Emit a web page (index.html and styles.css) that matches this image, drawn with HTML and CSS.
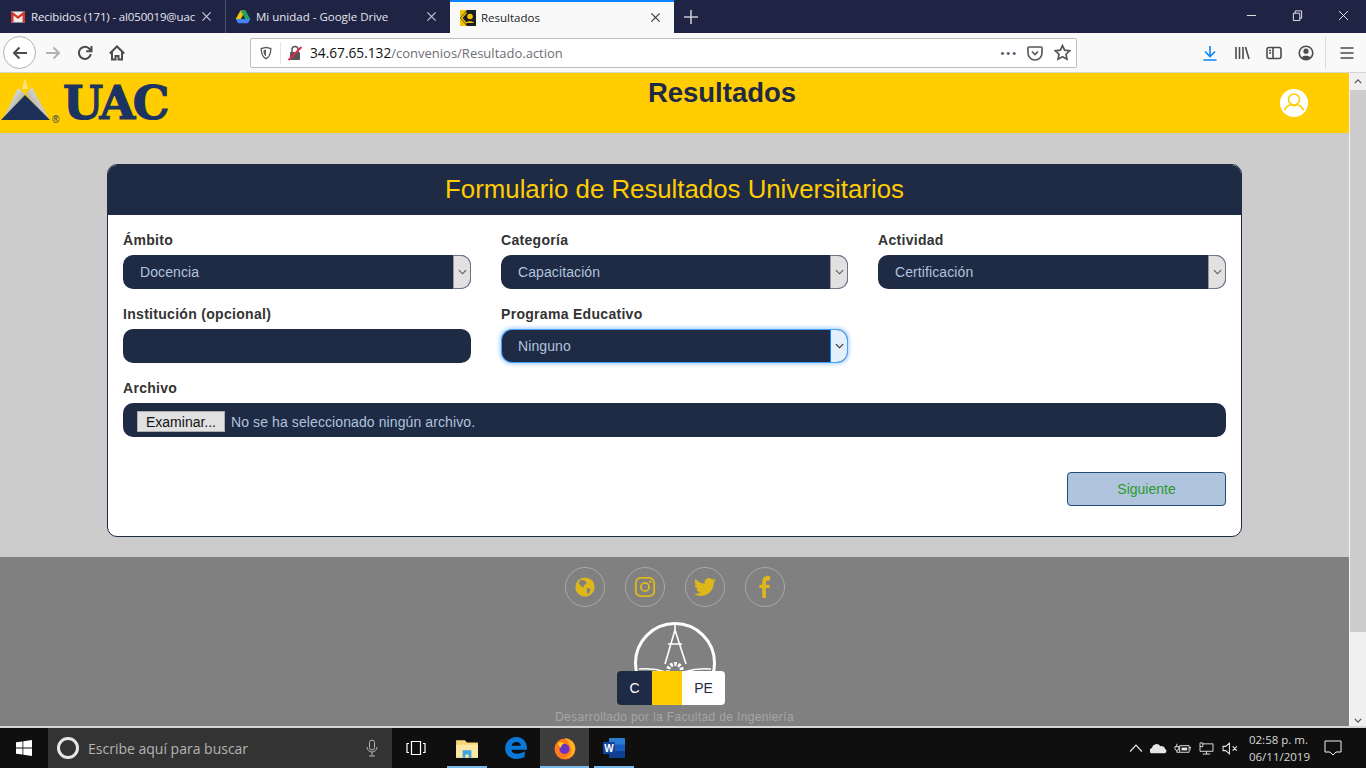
FILE: index.html
```html
<!DOCTYPE html>
<html lang="es">
<head>
    <meta charset="UTF-8">
    <meta name="viewport" content="width=device-width, initial-scale=1.0">
    <title>Resultados</title>
    <link rel="stylesheet" href="styles.css">
</head>
<body>
    <!-- barra de pestañas -->
    <div class="tabbar">
        <div class="tab">
            <svg class="favicon" viewBox="0 0 16 16"><rect x="1" y="2.500" width="14" height="11" fill="#eee"/><path d="M1 3v10.500h2.500V6.500L8 10l4.500-3.500v7H15V3l-1-.5L8 7 2 2.500z" fill="#d2392b"/></svg>
            <span class="tab-title tab-title-long">Recibidos (171) - al050019@uac</span>
            <svg class="tab-close" viewBox="0 0 12 12"><path d="M1.500 1.500l9 9M10.500 1.500l-9 9"/></svg>
        </div>
        <div class="tab tab-sep">
            <svg class="favicon" viewBox="0 0 16 16"><path d="M5.500 1.500h5L5.800 10H.7z" fill="#f4c20d"/><path d="M10.500 1.500L15.300 10h-5L5.500 1.500z" fill="#1fa463"/><path d="M.7 10h14.600l-2.400 4.300H3.200z" fill="#4285f4"/></svg>
            <span class="tab-title">Mi unidad - Google Drive</span>
            <svg class="tab-close" viewBox="0 0 12 12"><path d="M1.500 1.500l9 9M10.500 1.500l-9 9"/></svg>
        </div>
        <div class="tab tab-active">
            <svg class="favicon" viewBox="0 0 16 16"><rect width="16" height="16" fill="#f2c200"/><path d="M7 0h9v16H7L0 8z" fill="#1d1d24"/><path d="M6.500 2.500L1.500 8l5 5.500" fill="none" stroke="#f2c200" stroke-width="1.500"/><circle cx="10" cy="6.500" r="2.800" fill="#f2c200"/><path d="M6 13c.5-2.500 7.500-2.500 8 0z" fill="#f2c200"/></svg>
            <span class="tab-title">Resultados</span>
            <svg class="tab-close" viewBox="0 0 12 12"><path d="M1.500 1.500l9 9M10.500 1.500l-9 9"/></svg>
        </div>
        <svg class="tab-new" viewBox="0 0 14 14"><path d="M7 0v14M0 7h14"/></svg>
        <div class="win-controls">
            <svg viewBox="0 0 12 12"><path d="M1 6h10"/></svg>
            <svg viewBox="0 0 12 12"><path d="M1.500 3.500h7v8h-7zM3.500 3.500v-2.500h7v8h-2"/></svg>
            <svg viewBox="0 0 12 12"><path d="M1 1l10 10M11 1L1 11"/></svg>
        </div>
    </div>

    <!-- barra de navegacion -->
    <div class="toolbar">
        <div class="back-btn">
            <svg class="tool-icon nav-icon" viewBox="0 0 16 16"><path d="M15 8H2M7.500 2.500L2 8l5.500 5.500"/></svg>
        </div>
        <svg class="tool-icon fwd" viewBox="0 0 16 16"><path d="M1 8h13M8.500 2.500L14 8l-5.500 5.500"/></svg>
        <svg class="tool-icon nav-icon reload" viewBox="0 0 16 16"><path d="M13.800 9A6 6 0 1 1 11.800 3.300L14 5.500M14.500 1v5.300H9.200"/></svg>
        <svg class="tool-icon nav-icon home" viewBox="0 0 16 16"><path d="M.8 8.500L8 1.500l7.200 7M3 6.500v8h3.500v-3.500h3v3.500H13v-8"/></svg>
        <div class="urlbar">
            <svg class="url-shield" viewBox="0 0 16 16"><path d="M8 1.500l5.500 1.500c0 5-1 9-5.500 11.500C3.500 12 2.500 8 2.500 3z"/><path class="shield-fill" d="M8 4v8c-2-1.500-3-4-3-7z"/></svg>
            <span class="url-divider"></span>
            <svg class="url-lock" viewBox="0 0 16 16"><path d="M5 7V4.500a3 3 0 0 1 6 0V7" fill="none" stroke="#555" stroke-width="1.500"/><rect x="3" y="7" width="10" height="8" rx="1" fill="#555"/><path d="M1.500 15L14.500 2" stroke="#e22850" stroke-width="2"/></svg>
            <span class="url-text"><span class="url-host">34.67.65.132</span>/convenios/Resultado.action</span>
            <span class="url-dots">•••</span>
            <svg class="url-pocket" viewBox="0 0 16 16"><path d="M2 2h12a1 1 0 0 1 1 1v5a7 7 0 0 1-14 0V3a1 1 0 0 1 1-1zM5 6.500l3 3 3-3"/></svg>
            <svg class="url-star" viewBox="0 0 16 16"><path d="M8 1.500l2 4.300 4.700.6-3.400 3.200.9 4.700L8 12l-4.200 2.300.9-4.700L1.300 6.400 6 5.800z"/></svg>
        </div>
        <div class="tool-right">
            <svg class="tool-icon download" viewBox="0 0 16 16"><path d="M8 1v10M3 6.500L8 11.500l5-5M1.500 15h13"/></svg>
            <svg class="tool-icon" viewBox="0 0 16 16"><path d="M2 2v12M5.500 2v12M9 2v12M11.500 2l3.500 12"/></svg>
            <svg class="tool-icon" viewBox="0 0 16 16"><rect x="1" y="2.500" width="14" height="11" rx="2"/><path d="M7 2.500v11M3 5.500h2M3 8h2"/></svg>
            <svg class="tool-icon" viewBox="0 0 16 16"><circle cx="8" cy="8" r="6.800"/><circle class="solid" cx="8" cy="6.200" r="2.600"/><path class="solid" d="M3.500 12.500c1-2.500 8-2.500 9 0-2 2.200-7 2.200-9 0z"/></svg>
            <span class="tool-sep"></span>
            <svg class="tool-icon menu" viewBox="0 0 16 16"><path d="M1.500 3h13M1.500 8h13M1.500 13h13"/></svg>
        </div>
    </div>

    <div class="viewport">
        <div class="page">
            <header class="site-header">
                <div class="brand">
                    <svg class="brand-mark" viewBox="0 0 54 44">
                        <defs>
                            <linearGradient id="silverL" x1="0" y1="0" x2="1" y2="1"><stop offset="0" stop-color="#fff"/><stop offset="1" stop-color="#8a8a80"/></linearGradient>
                            <linearGradient id="silverR" x1="1" y1="0" x2="0" y2="1"><stop offset="0" stop-color="#f4f4f0"/><stop offset="1" stop-color="#9a9a8c"/></linearGradient>
                        </defs>
                        <path d="M25 0l3 11h-6z" fill="#ffe27a"/>
                        <path d="M3 41L18 10l7 6L8 36z" fill="url(#silverL)"/>
                        <path d="M32 9l17 32-7-5-16-20z" fill="url(#silverR)"/>
                        <path d="M1 42l24-25 25 25z" fill="#1d3158"/>
                    </svg>
                    <span class="brand-name">UAC</span>
                    <span class="brand-reg">®</span>
                </div>
                <h1 class="site-title">Resultados</h1>
                <div class="user-slot">
                    <svg class="user-icon" viewBox="0 0 28 28"><circle cx="14" cy="14" r="14" fill="#fff"/><circle cx="14" cy="10.500" r="5.500" fill="none" stroke="#ffcd00" stroke-width="1.500"/><path d="M4.500 21.500c1-4 5-5.500 6.500-6 1.500 1.500 4.500 1.500 6 0 1.500.5 5.500 2 6.500 6" fill="none" stroke="#ffcd00" stroke-width="1.500"/></svg>
                </div>
            </header>

            <main class="content">
                <section class="card">
                    <h2 class="card-title">Formulario de Resultados Universitarios</h2>
                    <form class="card-body">
                        <div class="field">
                            <label class="field-label">Ámbito</label>
                            <div class="select"><span>Docencia</span><span class="select-arrow"><svg viewBox="0 0 10 6"><path d="M1 1l4 4 4-4"/></svg></span></div>
                        </div>
                        <div class="field">
                            <label class="field-label">Categoría</label>
                            <div class="select"><span>Capacitación</span><span class="select-arrow"><svg viewBox="0 0 10 6"><path d="M1 1l4 4 4-4"/></svg></span></div>
                        </div>
                        <div class="field">
                            <label class="field-label">Actividad</label>
                            <div class="select"><span>Certificación</span><span class="select-arrow"><svg viewBox="0 0 10 6"><path d="M1 1l4 4 4-4"/></svg></span></div>
                        </div>
                        <div class="field">
                            <label class="field-label">Institución (opcional)</label>
                            <div class="select"></div>
                        </div>
                        <div class="field">
                            <label class="field-label">Programa Educativo</label>
                            <div class="select select-focus"><span>Ninguno</span><span class="select-arrow"><svg viewBox="0 0 10 6"><path d="M1 1l4 4 4-4"/></svg></span></div>
                        </div>
                        <div class="field field-wide">
                            <label class="field-label">Archivo</label>
                            <div class="file-input"><span class="file-btn">Examinar...</span><span class="file-name">No se ha seleccionado ningún archivo.</span></div>
                        </div>
                        <div class="actions">
                            <span class="next-btn">Siguiente</span>
                        </div>
                    </form>
                </section>
            </main>

            <footer class="site-footer">
                <div class="social">
                    <span class="social-link"><svg viewBox="0 0 24 24"><circle cx="12" cy="12" r="10.500" fill="#deb81a"/><path d="M7 4l5 1 2 3-3 2-1 3-3-3-2-2zM14 13l4 1-1 4-2 2-1-3z" fill="#808080"/></svg></span>
                    <span class="social-link"><svg viewBox="0 0 24 24"><rect x="2" y="2" width="20" height="20" rx="5.500" fill="none" stroke="#deb81a" stroke-width="2"/><circle cx="12" cy="12" r="4.500" fill="none" stroke="#deb81a" stroke-width="2"/><circle cx="17.800" cy="6.200" r="1.300" fill="#deb81a"/></svg></span>
                    <span class="social-link"><svg viewBox="0 0 24 24"><path fill="#deb81a" d="M23.953 4.570a10 10 0 01-2.825.775 4.958 4.958 0 002.163-2.723c-.951.555-2.005.959-3.127 1.184a4.920 4.920 0 00-8.384 4.482C7.690 8.095 4.067 6.130 1.640 3.162a4.822 4.822 0 00-.666 2.475c0 1.710.870 3.213 2.188 4.096a4.904 4.904 0 01-2.228-.616v.060a4.923 4.923 0 003.946 4.827 4.996 4.996 0 01-2.212.085 4.936 4.936 0 004.604 3.417 9.867 9.867 0 01-6.102 2.105c-.390 0-.779-.023-1.170-.067a13.995 13.995 0 007.557 2.209c9.053 0 13.998-7.496 13.998-13.985 0-.210 0-.420-.015-.630A9.935 9.935 0 0024 4.590z"/></svg></span>
                    <span class="social-link"><svg viewBox="0 0 24 24"><path fill="#deb81a" d="M15 5c-1.500 0-2 .8-2 2.200V9.500h4V13h-4v11H9V13H5.800V9.500H9V6.500C9 2.500 11 0 15 0h2.500v5z"/></svg></span>
                </div>
                <svg class="faculty-logo" viewBox="0 0 84 64">
                    <circle cx="42" cy="41" r="39.500" fill="none" stroke="#fff" stroke-width="3"/>
                    <path d="M42 3v6M42 8L32 42M42 8l11 34M35 22h14" fill="none" stroke="#fff" stroke-width="1.600"/>
                    <circle cx="42" cy="49" r="7" fill="none" stroke="#fff" stroke-width="4" stroke-dasharray="2.500 1.500"/>
                    <path d="M6 47c10-1 18 0 27 3M78 47c-10-1-18 0-27 3" fill="none" stroke="#fff" stroke-width="1.500"/>
                </svg>
                <p class="footer-text">Desarrollado por la Facultad de Ingeniería</p>
                <div class="cpe-badge">
                    <span class="cpe-c">C</span>
                    <span class="cpe-mid"></span>
                    <span class="cpe-pe">PE</span>
                </div>
            </footer>
        </div>
        <aside class="scrollbar">
            <svg class="scroll-arrow" viewBox="0 0 10 6"><path d="M1 5l4-4 4 4"/></svg>
            <span class="scroll-thumb"></span>
            <svg class="scroll-arrow scroll-down" viewBox="0 0 10 6"><path d="M1 1l4 4 4-4"/></svg>
        </aside>
    </div>

    <!-- barra de tareas -->
    <div class="taskbar">
        <div class="start">
            <svg viewBox="0 0 16 16"><path fill="#fff" d="M0 2.300l6.500-.9v6.200H0zM7.300 1.300L16 0v7.600H7.300zM0 8.400h6.500v6.200L0 13.700zM7.300 8.400H16V16l-8.700-1.200z"/></svg>
        </div>
        <div class="search">
            <span class="cortana"></span>
            <span class="search-text">Escribe aquí para buscar</span>
            <svg class="mic" viewBox="0 0 12 18"><rect x="3.500" y="1" width="5" height="10" rx="2.500"/><path d="M1 8a5 5 0 0 0 10 0M6 13v4M3 17h6"/></svg>
        </div>
        <div class="task-icons">
            <span class="task-item task-view"><svg class="taskview" viewBox="0 0 20 16"><path d="M5.500 1.500h9v13h-9zM3 3.500H1v9h2M17 3.500h2v9h-2"/></svg></span>
            <span class="task-item task-open"><svg viewBox="0 0 22 20"><path d="M1 3h8l2 2h10v14H1z" fill="#f7d774"/><path d="M1 7h20v12H1z" fill="#fce8a6"/><path d="M7 19v-7h8v7h-2.500v-3h-3v3z" fill="#3aa7e3"/></svg></span>
            <span class="task-item"><svg viewBox="0 0 22 22"><path fill="#0a78d6" d="M11.500 1C5 1 1 6 1 11.500S5.500 21 11 21c3.500 0 6-.8 8-2v-5c-2 1.500-4.300 2.300-7 2.300-3 0-5-1.500-5.200-3.800H21c.5-6-3-11.500-9.500-11.500zM7 9c.2-2 2-3.500 4.300-3.500S15.500 7 15.500 9z"/></svg></span>
            <span class="task-item task-open task-current"><svg viewBox="0 0 24 24"><circle cx="12" cy="13" r="10.500" fill="#ff7a1a"/><path d="M12 2c5 1 9 3 10 9 1 5-3 11-10 11 6-3 7-6 6-10-1-3-3-6-6-10z" fill="#ffb01f"/><circle cx="11.500" cy="13" r="5" fill="#6a32c9"/><path d="M5 7c2-1 4-1 6 0-2 1-3 3-3 5-1.500-1-2.500-3-3-5z" fill="#ffd21f"/></svg></span>
            <span class="task-item task-open"><svg viewBox="0 0 24 22"><rect x="7" y="1" width="16" height="20" rx="1" fill="#2b7cd3"/><rect x="7" y="14" width="16" height="7" fill="#103f91"/><rect x="7" y="7.500" width="16" height="6.500" fill="#185abd"/><rect x="1" y="5" width="12" height="12" rx="1" fill="#11449e"/><text class="word-w" x="7" y="14.500">W</text></svg></span>
        </div>
        <div class="tray">
            <svg class="tray-icon" viewBox="0 0 12 8"><path d="M1 7l5-5.500L11 7"/></svg>
            <svg class="tray-icon tray-wide" viewBox="0 0 18 12"><path class="solid" d="M1 11a3 3 0 0 1 1-5.500A5 5 0 0 1 11 3.500a4 4 0 0 1 5 3 2.500 2.500 0 0 1 0 4.500z"/></svg>
            <svg class="tray-icon tray-wide" viewBox="0 0 18 12"><path d="M6 3h10v7H6zM16 5h2v3M3 1v3M1 4h4v2a2 2 0 0 1-4 0zM3 8v2h3"/><path class="solid" d="M8 5h6v3H8z"/></svg>
            <svg class="tray-icon tray-wide" viewBox="0 0 16 14"><path d="M1 1h3v4H1zM4 2h11v8H1V5M8 10v3M4 13h8"/></svg>
            <svg class="tray-icon tray-wide" viewBox="0 0 16 12"><path d="M1 4h2.500L7 1v10L3.500 8H1zM10 4l4 4M14 4l-4 4"/></svg>
            <div class="clock"><span>02:58 p. m.</span><span>06/11/2019</span></div>
            <svg class="notif" viewBox="0 0 18 16"><path d="M1 1h16v11h-5l-3 3-3-3H1z"/></svg>
        </div>
    </div>
</body>
</html>
```

FILE: styles.css
```css
* {
    box-sizing: border-box;
}
html, body {
    height: 768px;
    overflow: hidden;
}
body {
    margin: 0;
    font-family: "Liberation Sans", Arial, sans-serif;
    background: #ccc;
}
svg {
    display: block;
}

/* pestañas */
.tabbar {
    display: flex;
    align-items: stretch;
    height: 33px;
    background: #1f2344;
}
.tab {
    display: flex;
    align-items: center;
    width: 225px;
    padding: 0 13px 0 10px;
    color: #e6e7ee;
    font: 11.5px "Open Sans", "Noto Sans", sans-serif;
}
.tab-sep {
    padding-left: 9px;
    border-left: 1px solid #4a4e6a;
}
.tab-active {
    width: 224px;
    background: #f9f9fa;
    color: #1c1c22;
    border-top: 2px solid #0a84ff;
}
.favicon {
    width: 16px;
    height: 16px;
    flex: none;
    margin-right: 5px;
}
.tab-title {
    flex: 1;
    overflow: hidden;
    white-space: nowrap;
}
.tab-title-long {
    letter-spacing: -.15px;
}
.tab-close {
    width: 11px;
    height: 11px;
    flex: none;
    margin-left: 1px;
    fill: none;
    stroke: #c8c9d2;
    stroke-width: 1.3;
}
.tab-active .tab-close {
    stroke: #38383d;
}
.tab-new {
    width: 14px;
    height: 14px;
    align-self: center;
    margin-left: 10px;
    fill: none;
    stroke: #c8c9d2;
    stroke-width: 1.6;
}
.win-controls {
    display: flex;
    align-items: center;
    gap: 35px;
    margin-left: auto;
    padding-right: 17px;
    padding-bottom: 3px;
}
.win-controls svg {
    width: 11px;
    height: 11px;
    fill: none;
    stroke: #f2f2f2;
    stroke-width: 1;
}

/* navegacion */
.toolbar {
    display: flex;
    align-items: center;
    height: 40px;
    padding-left: 3px;
    background: #f9f9fa;
    border-bottom: 1px solid #d4d4d4;
}
.tool-icon {
    width: 16px;
    height: 16px;
    flex: none;
    fill: none;
    stroke: #4c4c50;
    stroke-width: 1.6;
}
.tool-icon .solid {
    fill: #4c4c50;
    stroke: none;
}
.nav-icon {
    stroke-width: 2;
}
.back-btn {
    display: flex;
    align-items: center;
    justify-content: center;
    width: 33px;
    height: 33px;
    border: 1px solid #b1b1b3;
    border-radius: 50%;
    background: #fff;
}
.fwd {
    margin-left: 9px;
    stroke: #b1b1b3;
    stroke-width: 2;
}
.reload {
    margin-left: 16px;
}
.home {
    margin-left: 16px;
}
.urlbar {
    display: flex;
    align-items: center;
    width: 827px;
    height: 30px;
    margin-left: 125px;
    padding: 0 5px 0 8px;
    background: #fff;
    border: 1px solid #bebebe;
    border-radius: 2px;
}
.url-shield {
    width: 14px;
    height: 16px;
    fill: none;
    stroke: #5a5a5e;
    stroke-width: 1.5;
}
.shield-fill {
    fill: #5a5a5e;
    stroke: none;
}
.url-divider {
    width: 1px;
    height: 22px;
    margin: 0 6px 0 7px;
    background: #e3e3e5;
}
.url-lock {
    width: 16px;
    height: 16px;
    flex: none;
}
.url-text {
    margin-left: 7px;
    color: #6e6e73;
    font: 13px "Open Sans", "Noto Sans", sans-serif;
}
.url-host {
    color: #111;
    font-size: 13.7px;
}
.url-dots {
    margin-left: auto;
    color: #55555a;
    font-size: 11px;
    letter-spacing: 2px;
}
.url-pocket {
    width: 16px;
    height: 16px;
    margin-left: 9px;
    fill: none;
    stroke: #55555a;
    stroke-width: 1.6;
}
.url-star {
    width: 17px;
    height: 17px;
    margin-left: 11px;
    fill: none;
    stroke: #55555a;
    stroke-width: 1.6;
}
.tool-right {
    display: flex;
    align-items: center;
    gap: 16px;
    margin-left: 125px;
}
.download {
    stroke: #0a84ff;
}
.tool-sep {
    width: 1px;
    height: 32px;
    margin-left: -5px;
    background: #dcdcde;
}
.menu {
    margin-left: -3px;
}

/* pagina */
.viewport {
    display: flex;
    height: 653px;
}
.page {
    position: relative;
    display: flex;
    flex-direction: column;
    width: 1349px;
    overflow: hidden;
}
.site-header {
    display: flex;
    height: 60px;
    flex: none;
    background: #ffcd00;
}
.brand {
    display: flex;
    width: 170px;
    flex: none;
    position: relative;
}
.brand-mark {
    width: 54px;
    height: 44px;
    margin-top: 5px;
    flex: none;
}
.brand-name {
    margin: 3px 0 0 9px;
    color: #1c3461;
    font: bold 46px/1.2 "DejaVu Serif", "Liberation Serif", serif;
    letter-spacing: -2.300px;
    -webkit-text-stroke: 1.200px #1c3461;
}
.brand-reg {
    position: absolute;
    left: 52px;
    top: 41px;
    color: #1c3461;
    font-size: 10px;
}
.site-title {
    flex: 1;
    margin: 3px 0 0;
    color: #1f2a44;
    font-size: 27.500px;
    font-weight: bold;
    line-height: 33px;
    text-align: center;
}
.user-slot {
    width: 75px;
    flex: none;
    padding: 16px 0 0 6px;
}
.user-icon {
    width: 28px;
    height: 28px;
}
.content {
    flex: none;
    height: 424px;
    padding: 31px 107px 0;
    background: #ccc;
}
.card {
    height: 373px;
    background: #fff;
    border: 1px solid #1f2a44;
    border-radius: 10px;
    overflow: hidden;
}
.card-title {
    height: 50px;
    margin: 0;
    background: #1f2a44;
    color: #ffcd00;
    font-size: 25.800px;
    font-weight: normal;
    line-height: 48px;
    text-align: center;
}
.card-body {
    display: grid;
    grid-template-columns: 348px 347px 348px;
    column-gap: 30px;
    padding: 17px 15px 0;
}
.field {
    height: 74px;
}
.field-wide {
    grid-column: 1 / 4;
}
.field-label {
    display: block;
    height: 23px;
    color: #333;
    font-size: 14px;
    font-weight: bold;
    letter-spacing: .3px;
    line-height: 17px;
}
.select {
    display: flex;
    align-items: center;
    justify-content: space-between;
    height: 34px;
    padding-left: 17px;
    background: #1f2a44;
    border-radius: 10px;
    color: #b0c4de;
    font-size: 14px;
    letter-spacing: .1px;
    overflow: hidden;
}
.select-arrow {
    display: flex;
    align-items: center;
    justify-content: center;
    width: 18px;
    height: 34px;
    background: #e1e1e1;
    border: 1px solid #6c7488;
    border-left-color: #999;
    border-radius: 0 10px 10px 0;
}
.select-arrow svg {
    width: 9px;
    height: 6px;
    fill: none;
    stroke: #555;
    stroke-width: 1.2;
}
.select-focus {
    overflow: visible;
    box-shadow: 0 0 0 1px #45a1ff, 0 0 4px 2px #9fcdfb;
    height: 32px;
    margin: 1px 1px 0;
    padding-left: 16px;
}
.select-focus .select-arrow {
    height: 32px;
    width: 17px;
    background: #e3f0fb;
    border: 0;
    border-left: 1.500px solid #0a84ff;
}
.select-focus .select-arrow svg {
    stroke: #222;
}
.file-input {
    display: flex;
    align-items: center;
    gap: 6px;
    height: 34px;
    padding: 2px 0 0 14px;
    background: #1f2a44;
    border-radius: 10px;
    color: #b0c4de;
    font-size: 14px;
}
.file-name {
    padding-top: 1px;
    letter-spacing: .1px;
}
.file-btn {
    width: 88px;
    height: 21px;
    background: #e1e1e1;
    border: 1px solid #adadad;
    color: #111;
    line-height: 20px;
    text-align: center;
}
.actions {
    grid-column: 1 / 4;
    display: flex;
    justify-content: flex-end;
    padding-top: 18px;
}
.next-btn {
    width: 159px;
    height: 34px;
    background: #b0c4de;
    border: 1px solid #1f4a7a;
    border-radius: 4px;
    color: #2a9a2a;
    font-size: 14px;
    line-height: 32px;
    text-align: center;
}

/* pie */
.site-footer {
    flex: 1;
    display: flex;
    flex-direction: column;
    align-items: center;
    padding-top: 10px;
    background: #808080;
}
.social {
    display: flex;
    gap: 20px;
}
.social-link {
    display: flex;
    align-items: center;
    justify-content: center;
    width: 40px;
    height: 40px;
    border: 1px solid #a8a8a8;
    border-radius: 50%;
}
.social-link svg {
    width: 22px;
    height: 22px;
}
.faculty-logo {
    width: 84px;
    height: 64px;
    margin-top: 15px;
    flex: none;
}
.footer-text {
    margin: 24px 0 0;
    color: #a6a6a6;
    font-size: 12px;
    letter-spacing: .35px;
    line-height: 14px;
}
.cpe-badge {
    position: absolute;
    left: 617px;
    top: 598px;
    display: flex;
    width: 108px;
    height: 34px;
    border-radius: 4px;
    overflow: hidden;
    font-size: 14px;
    line-height: 34px;
    text-align: center;
}
.cpe-c {
    width: 35px;
    background: #1f2a44;
    color: #fff;
}
.cpe-mid {
    width: 30px;
    background: #ffcd00;
}
.cpe-pe {
    flex: 1;
    background: #fff;
    color: #1f2a44;
}

/* barra de desplazamiento */
.scrollbar {
    position: relative;
    width: 17px;
    background: #f0f0f0;
    border-left: 1px solid #f5f5f5;
}
.scroll-arrow {
    width: 8px;
    height: 5px;
    margin: 6px 0 0 4px;
    fill: none;
    stroke: #555;
    stroke-width: 1.6;
}
.scroll-thumb {
    display: block;
    height: 542px;
    margin-top: 6px;
    background: #cdcdcd;
}
.scroll-down {
    margin-top: 86px;
}

/* barra de tareas */
.taskbar {
    display: flex;
    height: 42px;
    background: #0f0f0f;
    border-top: 2px solid #d6d6d6;
    color: #d8d8d8;
}
.start {
    display: flex;
    align-items: center;
    justify-content: center;
    width: 48px;
}
.start svg {
    width: 16px;
    height: 16px;
}
.search {
    display: flex;
    align-items: center;
    width: 344px;
    padding-left: 9px;
    background: #333;
}
.cortana {
    width: 22px;
    height: 22px;
    border: 3px solid #e8e8e8;
    border-radius: 50%;
}
.search-text {
    margin-left: 9px;
    color: #b4b4b4;
    font: 14px "Open Sans", "Noto Sans", sans-serif;
}
.mic {
    width: 12px;
    height: 18px;
    margin-left: auto;
    margin-right: 14px;
    fill: none;
    stroke: #b4b4b4;
}
.task-icons {
    display: flex;
}
.task-item {
    position: relative;
    display: flex;
    align-items: center;
    justify-content: center;
    width: 49px;
}
.task-view {
    width: 47px;
    margin-right: 3px;
}
.task-item svg {
    width: 24px;
    height: 24px;
}
.task-item svg.taskview {
    width: 20px;
    height: 16px;
    fill: none;
    stroke: #fff;
    stroke-width: 1.200;
}
.task-open::after {
    content: "";
    position: absolute;
    left: 5px;
    right: 4px;
    bottom: 0;
    height: 2px;
    background: #76b9ed;
}
.task-current {
    background: #3d3d3d;
}
.task-current::after {
    left: 0;
    right: 0;
}
.word-w {
    fill: #fff;
    font: bold 10px "Liberation Sans", sans-serif;
    text-anchor: middle;
}
.tray {
    display: flex;
    align-items: center;
    margin-left: auto;
    padding-right: 24px;
    gap: 7px;
}
.tray-icon {
    width: 14px;
    height: 10px;
    fill: none;
    stroke: #e6e6e6;
    stroke-width: 1;
}
.tray-wide {
    width: 17px;
    height: 13px;
}
.tray-icon .solid {
    fill: #e6e6e6;
    stroke: none;
}
.clock {
    display: flex;
    flex-direction: column;
    align-items: flex-start;
    gap: 2px;
    margin: 0 7px 0 3px;
    font: 11.500px/15px "Open Sans", "Noto Sans", sans-serif;
}
.notif {
    width: 18px;
    height: 16px;
    fill: none;
    stroke: #f2f2f2;
    stroke-width: 1;
}
```
